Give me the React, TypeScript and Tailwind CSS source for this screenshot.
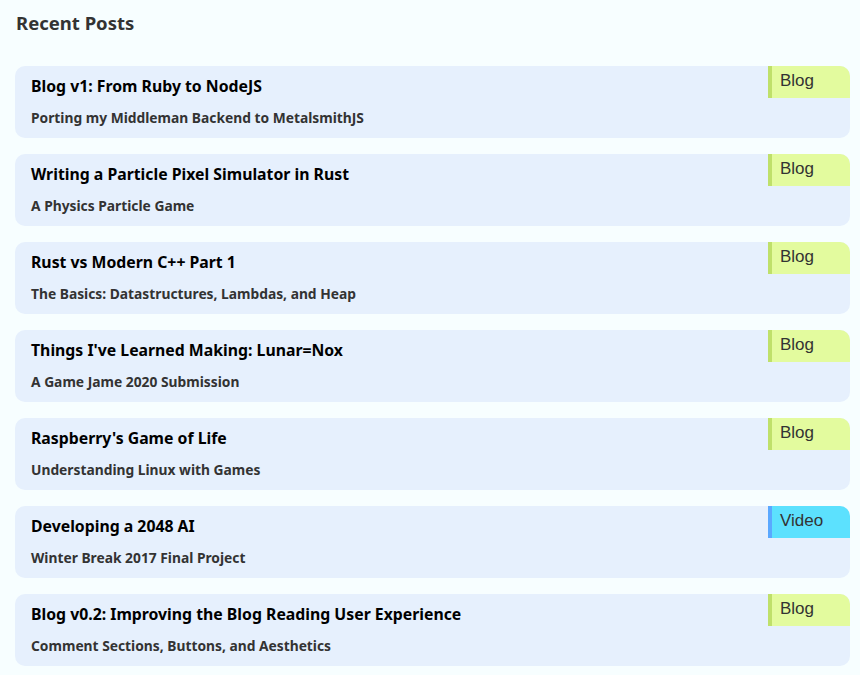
const posts = [
  { title: "Blog v1: From Ruby to NodeJS", sub: "Porting my Middleman Backend to MetalsmithJS", tag: "Blog" },
  { title: "Writing a Particle Pixel Simulator in Rust", sub: "A Physics Particle Game", tag: "Blog" },
  { title: "Rust vs Modern C++ Part 1", sub: "The Basics: Datastructures, Lambdas, and Heap", tag: "Blog" },
  { title: "Things I've Learned Making: Lunar=Nox", sub: "A Game Jame 2020 Submission", tag: "Blog" },
  { title: "Raspberry's Game of Life", sub: "Understanding Linux with Games", tag: "Blog" },
  { title: "Developing a 2048 AI", sub: "Winter Break 2017 Final Project", tag: "Video" },
  { title: "Blog v0.2: Improving the Blog Reading User Experience", sub: "Comment Sections, Buttons, and Aesthetics", tag: "Blog" },
];

export default function App() {
  return (
    <div className="min-h-[675px] bg-[#f7feff] pl-[15px] pr-[10px] pt-[10px] font-['Noto_Sans',sans-serif]">
      <h2 className="pl-[1px] text-[18.5px] font-bold leading-[26px] text-[#333]">Recent Posts</h2>
      <div className="mt-[30px] flex flex-col gap-[16px]">
        {posts.map((p) => (
          <div key={p.title} className="relative h-[72px] rounded-[10px] bg-[#e6f0fd] px-[16px] pt-[9px]">
            <h3 className="text-[15.8px] font-bold leading-[22px] text-black">{p.title}</h3>
            <p className="mt-[11px] text-[13.8px] font-bold leading-[20px] text-[#333]">{p.sub}</p>
            <span
              className={
                "absolute right-0 top-0 h-[32px] w-[82px] rounded-tr-[10px] border-l-4 pl-[8px] pt-[5px] font-['Liberation_Sans',sans-serif] text-[17px] leading-[20px] text-[#333] " +
                (p.tag === "Video" ? "border-[#5aa8ff] bg-[#5ce1fe]" : "border-[#bfe06a] bg-[#e3fb9e]")
              }
            >
              {p.tag}
            </span>
          </div>
        ))}
      </div>
    </div>
  );
}
